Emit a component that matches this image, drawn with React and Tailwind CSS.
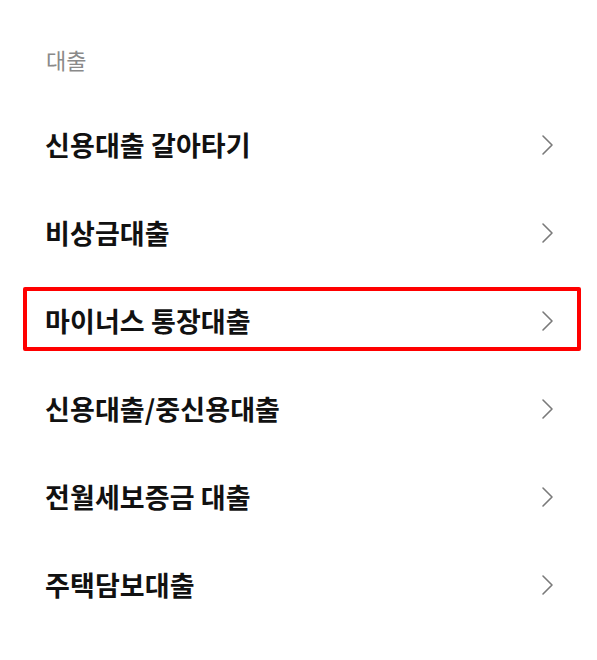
import React from 'react';

const ITEMS = [
  { id: 'switch', label: '신용대출 갈아타기' },
  { id: 'emergency', label: '비상금대출' },
  { id: 'minus', label: '마이너스 통장대출', highlight: true },
  { id: 'credit', label: '신용대출/중신용대출' },
  { id: 'jeonse', label: '전월세보증금 대출' },
  { id: 'mortgage', label: '주택담보대출' },
];

const Chevron = () => (
  <svg width="14" height="22" viewBox="0 0 14 22" fill="none" stroke="#7a7a7a" strokeWidth="1.6" strokeLinecap="round" strokeLinejoin="round">
    <path d="M2 2l9 9-9 9" />
  </svg>
);

export default function App() {
  return (
    <div className="w-[597px] h-[660px] bg-white pt-[43px] font-['Noto_Sans_CJK_KR','Noto_Sans',sans-serif]">
      <div className="px-[46px] text-[22px] leading-[32px] text-[#8a8a8a]">대출</div>

      <div className="mt-[26px] flex flex-col">
        {ITEMS.map(item => (
          <div key={item.id} className="relative h-[88px] flex items-center justify-between pl-[45px] pr-[42px]">
            <span className="text-[27px] font-bold text-[#111] tracking-[0.1px]">{item.label}</span>
            <Chevron />
            {item.highlight && (
              <div className="absolute left-[23px] right-[16px] top-[10px] bottom-[14px] border-[4px] border-[#ff0000] rounded-[2px]" />
            )}
          </div>
        ))}
      </div>
    </div>
  );
}
